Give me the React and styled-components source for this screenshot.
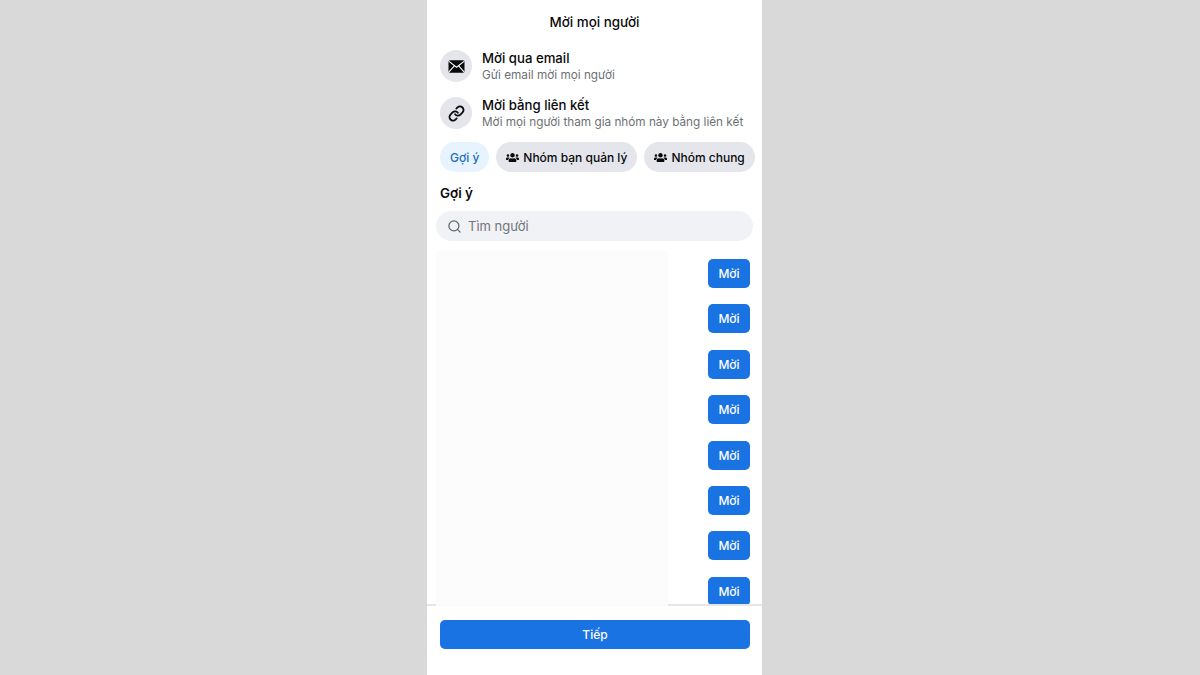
import React from 'react'
import styled, { createGlobalStyle } from 'styled-components'
import { Link, Search } from 'lucide-react'
import { FaUsers } from 'react-icons/fa'

const inviteRows = [
    { title: 'Mời qua email', sub: 'Gửi email mời mọi người', icon: 'mail' },
    { title: 'Mời bằng liên kết', sub: 'Mời mọi người tham gia nhóm này bằng liên kết', icon: 'link' },
]

function MailIcon() {
    return (
        <svg width="17" height="13" viewBox="0 0 17 13">
            <rect x="0.5" y="0.3" width="16" height="12.4" rx="1.6" fill="#0a0a0c" />
            <path d="M1 1.4 L8.5 7.2 L16 1.4 M1 11.8 L6.3 5.8 M16 11.8 L10.7 5.8" fill="none" stroke="#fff" strokeWidth="1.1" />
        </svg>
    )
}

export default function App() {
    return (
        <>
            <GlobalStyle />
            <Page>
                <Phone>
                    <Title>Mời mọi người</Title>
                    <InviteList>
                        {inviteRows.map((row) => (
                            <InviteRow key={row.title}>
                                <IconCircle>
                                    {row.icon === 'mail' ? <MailIcon /> : <Link size={17} strokeWidth={2.5} color="#0a0a0c" />}
                                </IconCircle>
                                <RowText>
                                    <RowTitle>{row.title}</RowTitle>
                                    <RowSub>{row.sub}</RowSub>
                                </RowText>
                            </InviteRow>
                        ))}
                    </InviteList>
                    <Chips>
                        <Chip $active>Gợi ý</Chip>
                        <Chip><FaUsers size={13} />Nhóm bạn quản lý</Chip>
                        <Chip><FaUsers size={13} />Nhóm chung</Chip>
                    </Chips>
                    <Heading>Gợi ý</Heading>
                    <SearchBar>
                        <Search size={15} strokeWidth={2} color="#5f6570" />
                        <span>Tìm người</span>
                    </SearchBar>
                    <People>
                        {[...Array(8).keys()].map((index) => (
                            <InviteButton key={`invite${index}`}>Mời</InviteButton>
                        ))}
                    </People>
                    <Footer>
                        <NextButton>Tiếp</NextButton>
                    </Footer>
                    <HiddenNames />
                </Phone>
            </Page>
        </>
    )
}

const GlobalStyle = createGlobalStyle`
    html, body {
        margin: 0;
        padding: 0;
        background: #d9d9d9;
    }
    * {
        box-sizing: border-box;
    }
`
const Page = styled.div`
    width: 1200px;
    height: 675px;
    overflow: hidden;
    padding-left: 427px;
    font-family: Inter, "Liberation Sans", sans-serif;
`
const Phone = styled.div`
    position: relative;
    width: 335px;
    height: 675px;
    background: #fff;
    display: flex;
    flex-direction: column;
`
const Title = styled.div`
    height: 44px;
    line-height: 44px;
    text-align: center;
    font-size: 13.4px;
    font-weight: 500;
    color: #0a0a0c;
`
const InviteList = styled.div`
    display: flex;
    flex-direction: column;
    gap: 15px;
    padding: 6px 0 0 13px;
`
const InviteRow = styled.div`
    display: flex;
    align-items: center;
    gap: 10px;
    height: 32px;
`
const IconCircle = styled.div`
    width: 32px;
    height: 32px;
    border-radius: 50%;
    background: #e4e6eb;
    display: flex;
    align-items: center;
    justify-content: center;
`
const RowText = styled.div`
    padding-top: 1px;
`
const RowTitle = styled.div`
    font-size: 13.2px;
    line-height: 16px;
    font-weight: 500;
    color: #0a0a0c;
`
const RowSub = styled.div`
    font-size: 11.75px;
    line-height: 17px;
    margin-top: 1px;
    color: #6d7075;
    white-space: nowrap;
`
const Chips = styled.div`
    display: flex;
    gap: 6.5px;
    padding: 13px 0 0 13px;
`
const Chip = styled.div`
    height: 30px;
    padding: 0 10px;
    border-radius: 15px;
    display: flex;
    align-items: center;
    gap: 4.5px;
    font-size: 12px;
    font-weight: 500;
    white-space: nowrap;
    background: ${(props) => (props.$active ? '#e7f3ff' : '#e4e6eb')};
    color: ${(props) => (props.$active ? '#1b6fbd' : '#0a0a0c')};
`
const Heading = styled.div`
    padding: 12px 0 0 13px;
    font-size: 13.4px;
    line-height: 18px;
    font-weight: 600;
    color: #0a0a0c;
`
const SearchBar = styled.div`
    margin: 9px 0 0 9px;
    width: 317px;
    height: 30px;
    border-radius: 15px;
    background: #f0f2f5;
    display: flex;
    align-items: center;
    gap: 6px;
    padding-left: 11px;
    font-size: 13px;
    color: #72757a;
`
const People = styled.div`
    flex: 1;
    display: flex;
    flex-direction: column;
    align-items: flex-end;
    gap: 16.4px;
    padding: 18px 12px 0 0;
    overflow: hidden;
`
const InviteButton = styled.div`
    flex: none;
    width: 42px;
    height: 29px;
    border-radius: 5px;
    background: #1a73e3;
    color: #fff;
    font-size: 12px;
    font-weight: 500;
    display: flex;
    align-items: center;
    justify-content: center;
`
const Footer = styled.div`
    flex: none;
    height: 71px;
    border-top: 2px solid #e6e6e6;
    padding: 14px 12px 0 13px;
`
const NextButton = styled.div`
    height: 29px;
    border-radius: 5px;
    background: #1a73e3;
    color: #fff;
    font-size: 12px;
    font-weight: 500;
    display: flex;
    align-items: center;
    justify-content: center;
`
// blank patch lying over the names in the list
const HiddenNames = styled.div`
    position: absolute;
    left: 9px;
    top: 250px;
    width: 232px;
    height: 357px;
    background: #fcfcfc;
`
